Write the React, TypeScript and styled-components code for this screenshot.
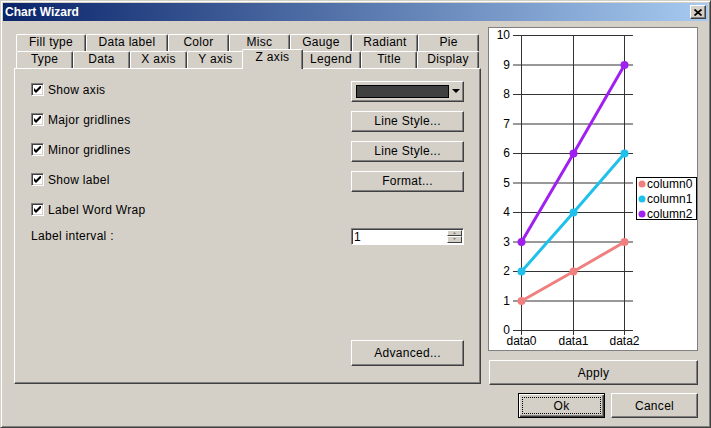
import * as React from 'react';
import styled, { createGlobalStyle } from 'styled-components';

const GlobalStyle = createGlobalStyle`
  html, body {
    margin: 0;
    padding: 0;
    background: #d4d0c8;
  }
  body {
    font-family: "Liberation Sans", Arial, sans-serif;
    font-size: 12px;
    color: #000;
  }
`;

const Window = styled.div`
  width: 711px;
  height: 428px;
  box-sizing: border-box;
  background: #d4d0c8;
  border: 1px solid;
  border-color: #d4d0c8 #404040 #404040 #d4d0c8;
  box-shadow: inset 1px 1px #fff, inset -1px -1px #808080;
  padding: 2px;
  display: flex;
  flex-direction: column;
`;

const TitleBar = styled.div`
  height: 18px;
  flex: none;
  display: flex;
  align-items: center;
  justify-content: space-between;
  padding: 0 2px 0 2px;
  background: linear-gradient(to right, #0a246a, #a6caf0);
  color: #fff;
  font-weight: bold;
  font-size: 12px;
`;

const CloseButton = styled.div`
  width: 16px;
  height: 14px;
  box-sizing: border-box;
  background: #d4d0c8;
  border: 1px solid;
  border-color: #fff #404040 #404040 #fff;
  box-shadow: inset -1px -1px #808080;
  display: flex;
  align-items: center;
  justify-content: center;
`;

const Body = styled.div`
  flex: 1;
  display: flex;
  flex-direction: column;
  padding: 6px 10px 7px 11px;
`;

const Main = styled.div`
  display: flex;
  gap: 7px;
  align-items: flex-start;
`;

const TabControl = styled.div`
  width: 467px;
  margin-top: 7px;
  display: flex;
  flex-direction: column;
`;

const TabRow = styled.div`
  display: flex;
  height: 17px;
  padding-left: 2px;
  align-items: flex-end;
`;

const Tab = styled.div<{ $w: number; $active?: boolean }>`
  width: ${(p) => p.$w}px;
  height: ${(p) => (p.$active ? 20 : 17)}px;
  flex: none;
  box-sizing: border-box;
  background: #d4d0c8;
  border-top: 1px solid #fff;
  border-left: 1px solid #fff;
  border-right: 1px solid #404040;
  box-shadow: inset -1px 0 #808080;
  border-radius: 2px 2px 0 0;
  text-align: center;
  line-height: 15px;
  letter-spacing: 0.3px;
  white-space: nowrap;
  ${(p) =>
    p.$active
      ? `
    margin: 0 -2px -1px -2px;
    position: relative;
    z-index: 1;
    padding-bottom: 4px;
  `
      : ''}
`;

const TabPanel = styled.div`
  height: 316px;
  box-sizing: border-box;
  border: 1px solid;
  border-color: #fff #404040 #404040 #fff;
  box-shadow: inset -1px -1px #808080;
  padding: 7px 16px 17px 16px;
  display: flex;
  flex-direction: column;
`;

const Row = styled.div<{ $h?: number }>`
  height: ${(p) => p.$h ?? 30}px;
  display: flex;
  align-items: center;
  justify-content: space-between;
`;

const CheckLabel = styled.label`
  display: flex;
  align-items: center;
  gap: 4px;
  padding-bottom: 3px;
  letter-spacing: 0.3px;
`;

const CheckBox = styled.span`
  width: 13px;
  height: 13px;
  box-sizing: border-box;
  background: #fff;
  border: 1px solid;
  border-color: #808080 #fff #fff #808080;
  box-shadow: inset 1px 1px #404040, inset -1px -1px #d4d0c8;
  display: flex;
  align-items: center;
  justify-content: center;
`;

const Text = styled.span`
  letter-spacing: 0.3px;
`;

const Button = styled.button<{ $w?: number; $h?: number; $default?: boolean }>`
  width: ${(p) => p.$w ?? 113}px;
  height: ${(p) => p.$h ?? 21}px;
  box-sizing: border-box;
  position: relative;
  margin: 0;
  padding: 0;
  font-family: "Liberation Sans", Arial, sans-serif;
  font-size: 12px;
  letter-spacing: 0.3px;
  color: #000;
  background: #d4d0c8;
  border: 1px solid;
  border-color: ${(p) => (p.$default ? '#000' : '#fff #404040 #404040 #fff')};
  box-shadow: ${(p) =>
    p.$default
      ? 'inset 1px 1px #fff, inset -1px -1px #404040, inset -2px -2px #808080'
      : 'inset -1px -1px #808080'};
  ${(p) =>
    p.$default
      ? `
    &::after {
      content: '';
      position: absolute;
      inset: 3px;
      border: 1px dotted #000;
    }
  `
      : ''}
`;

const ColorSelect = styled.div`
  width: 113px;
  height: 21px;
  box-sizing: border-box;
  background: #d4d0c8;
  border: 1px solid;
  border-color: #fff #404040 #404040 #fff;
  box-shadow: inset -1px -1px #808080;
  display: flex;
  align-items: center;
  padding: 0 3px 0 4px;
  gap: 3px;
`;

const Swatch = styled.div<{ $color: string }>`
  flex: 1;
  height: 11px;
  background: ${(p) => p.$color};
  border: 1px solid #000;
`;

const SpinBox = styled.div`
  width: 113px;
  height: 17px;
  box-sizing: border-box;
  background: #fff;
  border: 1px solid;
  border-color: #808080 #fff #fff #808080;
  box-shadow: inset 1px 1px #404040;
  display: flex;
  align-items: stretch;
  padding: 1px 1px 1px 2px;
`;

const SpinValue = styled.span`
  flex: 1;
  line-height: 14px;
`;

const SpinButtons = styled.div`
  width: 15px;
  display: flex;
  flex-direction: column;
`;

const SpinButton = styled.div`
  flex: 1;
  box-sizing: border-box;
  background: #d4d0c8;
  border: 1px solid;
  border-color: #fff #404040 #404040 #fff;
  display: flex;
  align-items: center;
  justify-content: center;
`;

const AdvancedRow = styled.div`
  margin-top: auto;
  display: flex;
  justify-content: flex-end;
`;

const Side = styled.div`
  width: 210px;
  display: flex;
  flex-direction: column;
  align-items: flex-end;
  gap: 9px;
`;

const ChartPanel = styled.div`
  width: 210px;
  height: 324px;
  box-sizing: border-box;
  background: #fff;
  border: 1px solid #808080;
  overflow: hidden;
`;

const Footer = styled.div`
  margin-top: 8px;
  display: flex;
  justify-content: flex-end;
  gap: 6px;
`;

const topTabs: [string, number][] = [
  ['Fill type', 70],
  ['Data label', 82],
  ['Color', 61],
  ['Misc', 61],
  ['Gauge', 62],
  ['Radiant', 66],
  ['Pie', 61],
];

const bottomTabs: [string, number][] = [
  ['Type', 57],
  ['Data', 57],
  ['X axis', 57],
  ['Y axis', 57],
  ['Z axis', 61],
  ['Legend', 60],
  ['Title', 56],
  ['Display', 62],
];

const checks = ['Show axis', 'Major gridlines', 'Minor gridlines', 'Show label', 'Label Word Wrap'];
const rightControls = ['color', 'Line Style...', 'Line Style...', 'Format...', ''];

const series = [
  { name: 'column0', color: '#f08080', values: [1, 2, 3] },
  { name: 'column1', color: '#1ec0ec', values: [2, 4, 6] },
  { name: 'column2', color: '#a020f0', values: [3, 6, 9] },
];

const xs = [32, 84, 135];
const yOf = (v: number) => 302 - 29.5 * v;

function Check() {
  return (
    <svg width="7" height="7" viewBox="0 0 7 7">
      <polygon points="0,2 2,4 7,-1 7,2 2,7 0,5" fill="#000" />
    </svg>
  );
}

function Chart() {
  const ticks = Array.from({ length: 11 }, (_, i) => i);
  return (
    <svg width="208" height="322" viewBox="0 0 208 322" fontFamily='"Liberation Sans", Arial, sans-serif' fontSize="12">
      {ticks.map((t) => (
        <g key={t}>
          <line x1={24} x2={144} y1={yOf(t) + 0.5} y2={yOf(t) + 0.5} stroke="#333" strokeWidth="1" />
          <text x={21} y={yOf(t) + 4} textAnchor="end" fill="#000">
            {t}
          </text>
        </g>
      ))}
      {xs.map((x, i) => (
        <g key={x}>
          <line x1={x + 0.5} x2={x + 0.5} y1={yOf(10)} y2={307} stroke="#333" strokeWidth="1" />
          <text x={x + 0.5} y={317} textAnchor="middle" fill="#000">
            data{i}
          </text>
        </g>
      ))}
      {series.map((s) => (
        <g key={s.name}>
          <polyline
            points={s.values.map((v, i) => `${xs[i] + 0.5},${yOf(v) + 0.5}`).join(' ')}
            fill="none"
            stroke={s.color}
            strokeWidth="3"
          />
          {s.values.map((v, i) => (
            <circle key={i} cx={xs[i] + 0.5} cy={yOf(v) + 0.5} r="4" fill={s.color} />
          ))}
        </g>
      ))}
      <rect x="147.5" y="149.5" width="60" height="42" fill="#fff" stroke="#000" />
      {series.map((s, i) => (
        <g key={s.name}>
          <circle cx="153" cy={156 + i * 15} r="3.5" fill={s.color} />
          <text x="158" y={160 + i * 15} fill="#000">
            {s.name}
          </text>
        </g>
      ))}
    </svg>
  );
}

export default function App() {
  return (
    <>
      <GlobalStyle />
      <Window>
        <TitleBar>
          <span>Chart Wizard</span>
          <CloseButton>
            <svg width="8" height="7" viewBox="0 0 8 7">
              <path d="M0.5 0.5L7.5 6.5M7.5 0.5L0.5 6.5" stroke="#000" strokeWidth="1.7" />
            </svg>
          </CloseButton>
        </TitleBar>
        <Body>
          <Main>
            <TabControl>
              <TabRow>
                {topTabs.map(([label, w]) => (
                  <Tab key={label} $w={w}>
                    {label}
                  </Tab>
                ))}
              </TabRow>
              <TabRow>
                {bottomTabs.map(([label, w]) => (
                  <Tab key={label} $w={w} $active={label === 'Z axis'}>
                    {label}
                  </Tab>
                ))}
              </TabRow>
              <TabPanel>
                {checks.map((label, i) => (
                  <Row key={label}>
                    <CheckLabel>
                      <CheckBox>
                        <Check />
                      </CheckBox>
                      {label}
                    </CheckLabel>
                    {rightControls[i] === 'color' ? (
                      <ColorSelect>
                        <Swatch $color="#404040" />
                        <svg width="8" height="4" viewBox="0 0 8 4">
                          <polygon points="0,0 8,0 4,4" fill="#000" />
                        </svg>
                      </ColorSelect>
                    ) : rightControls[i] ? (
                      <Button>{rightControls[i]}</Button>
                    ) : null}
                  </Row>
                ))}
                <Row $h={20}>
                  <Text>Label interval :</Text>
                  <SpinBox>
                    <SpinValue>1</SpinValue>
                    <SpinButtons>
                      <SpinButton>
                        <svg width="3" height="2" viewBox="0 0 3 2">
                          <polygon points="1.5,0 3,2 0,2" fill="#808080" />
                        </svg>
                      </SpinButton>
                      <SpinButton>
                        <svg width="3" height="2" viewBox="0 0 3 2">
                          <polygon points="0,0 3,0 1.5,2" fill="#808080" />
                        </svg>
                      </SpinButton>
                    </SpinButtons>
                  </SpinBox>
                </Row>
                <AdvancedRow>
                  <Button $h={26}>Advanced...</Button>
                </AdvancedRow>
              </TabPanel>
            </TabControl>
            <Side>
              <ChartPanel>
                <Chart />
              </ChartPanel>
              <Button $w={209} $h={25}>
                Apply
              </Button>
            </Side>
          </Main>
          <Footer>
            <Button $w={87} $h={25} $default>
              Ok
            </Button>
            <Button $w={87} $h={25}>
              Cancel
            </Button>
          </Footer>
        </Body>
      </Window>
    </>
  );
}
